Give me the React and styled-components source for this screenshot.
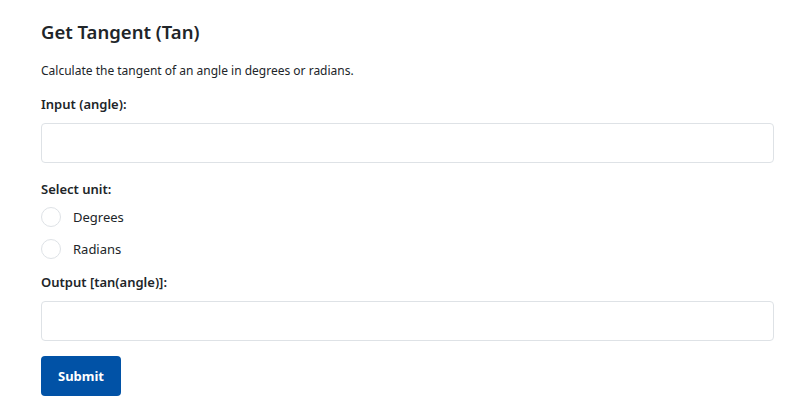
import React, { useState } from "react";
import styled, { createGlobalStyle } from "styled-components";

const Global = createGlobalStyle`
  * { box-sizing: border-box; }
  body { margin: 0; background: #fff; font-family: "Noto Sans", "Open Sans", sans-serif; color: #212529; }
`;

const Page = styled.div`
  padding: 18px 36px 0 41px;
  display: flex;
  flex-direction: column;
`;

const Title = styled.h1`
  margin: 0;
  font-size: 18.5px;
  font-weight: 600;
  line-height: 28px;
  color: #212529;
`;

const Desc = styled.p`
  margin: 15px 0 0;
  font-size: 12px;
  line-height: 20px;
  color: #212529;
`;

const Label = styled.div`
  margin-top: ${(p) => p.$mt}px;
  font-size: 13px;
  font-weight: 600;
  line-height: 20px;
`;

const Field = styled.input`
  margin-top: 9px;
  height: 40px;
  width: 100%;
  border: 1px solid #dee2e6;
  border-radius: 4px;
  font: inherit;
  padding: 0 12px;
  outline: none;
`;

const RadioList = styled.div`
  display: flex;
  flex-direction: column;
  gap: 12px;
  margin-top: 8px;
`;

const RadioRow = styled.label`
  display: flex;
  align-items: center;
  gap: 12px;
  font-size: 13px;
  line-height: 20px;
  cursor: pointer;
`;

const Circle = styled.span`
  width: 20px;
  height: 20px;
  border-radius: 50%;
  border: 1px solid #dee2e6;
  background: #fff;
`;

const Button = styled.button`
  margin-top: 15px;
  width: 80px;
  height: 40px;
  border: none;
  border-radius: 4px;
  background: #0152a6;
  color: #fff;
  font: inherit;
  font-size: 13px;
  font-weight: 700;
  cursor: pointer;
`;

export default function App() {
  const [unit, setUnit] = useState(null);
  return (
    <>
      <Global />
      <Page>
        <Title>Get Tangent (Tan)</Title>
        <Desc>Calculate the tangent of an angle in degrees or radians.</Desc>
        <Label $mt={13}>Input (angle):</Label>
        <Field type="text" />
        <Label $mt={16}>Select unit:</Label>
        <RadioList>
          {["Degrees", "Radians"].map((u) => (
            <RadioRow key={u} onClick={() => setUnit(u)}>
              <Circle />
              {u}
            </RadioRow>
          ))}
        </RadioList>
        <Label $mt={13}>Output [tan(angle)]:</Label>
        <Field type="text" readOnly />
        <Button>Submit</Button>
      </Page>
    </>
  );
}
